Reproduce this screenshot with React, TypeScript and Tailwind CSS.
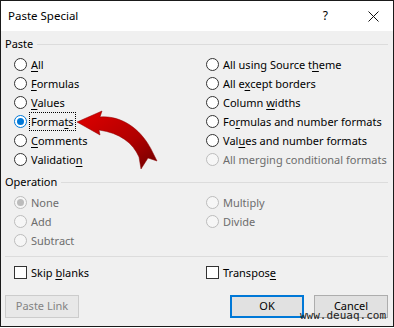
const font = { fontFamily: '"Noto Sans", "Open Sans", sans-serif' };

type Opt = { pre: string; u: string; post: string; checked?: boolean; disabled?: boolean; focus?: boolean };

function Radio({ checked, disabled }: { checked?: boolean; disabled?: boolean }) {
  return (
    <span
      className={`flex h-[13px] w-[13px] shrink-0 items-center justify-center rounded-full border ${
        disabled ? "border-[#bcbcbc] bg-[#f6f6f6]" : checked ? "border-[#0078d7] bg-white" : "border-[#333333] bg-white"
      }`}
    >
      {checked && <span className={`h-[7px] w-[7px] rounded-full ${disabled ? "bg-[#bcbcbc]" : "bg-[#0078d7]"}`} />}
    </span>
  );
}

function Label({ o }: { o: Opt }) {
  return (
    <span
      className={`whitespace-nowrap leading-[15px] ${o.disabled ? "text-[#6d6d6d]" : "text-black"} ${
        o.focus ? "outline-1 outline-dotted outline-black outline-offset-[1px]" : ""
      }`}
    >
      {o.pre}
      {o.u && <span className={o.disabled ? "" : "underline underline-offset-2"}>{o.u}</span>}
      {o.post}
    </span>
  );
}

function RadioRow({ o }: { o: Opt | null }) {
  if (!o) return <div className="h-[19px]" />;
  return (
    <div className="flex h-[19px] items-center gap-[4px]">
      <Radio checked={o.checked} disabled={o.disabled} />
      <Label o={o} />
    </div>
  );
}

function Header({ text }: { text: string }) {
  return (
    <div className="flex h-4 items-center gap-[4px] pr-[5px]">
      <span className="leading-4 text-black">{text}</span>
      <div className="h-px flex-1 bg-[#dcdcdc]" />
    </div>
  );
}

function Checkbox({ o }: { o: Opt }) {
  return (
    <div className="flex h-[19px] items-center gap-[4px]">
      <span className="h-[13px] w-[13px] shrink-0 border border-[#333333] bg-white" />
      <Label o={o} />
    </div>
  );
}

const pasteLeft: Opt[] = [
  { pre: "", u: "A", post: "ll" },
  { pre: "", u: "F", post: "ormulas" },
  { pre: "", u: "V", post: "alues" },
  { pre: "Forma", u: "t", post: "s", checked: true, focus: true },
  { pre: "", u: "C", post: "omments" },
  { pre: "Validatio", u: "n", post: "" },
];

const pasteRight: Opt[] = [
  { pre: "All using Source t", u: "h", post: "eme" },
  { pre: "All e", u: "x", post: "cept borders" },
  { pre: "Column ", u: "w", post: "idths" },
  { pre: "Fo", u: "r", post: "mulas and number formats" },
  { pre: "Val", u: "u", post: "es and number formats" },
  { pre: "All merging conditional formats", u: "", post: "", disabled: true },
];

const opLeft: Opt[] = [
  { pre: "None", u: "", post: "", checked: true, disabled: true },
  { pre: "Add", u: "", post: "", disabled: true },
  { pre: "Subtract", u: "", post: "", disabled: true },
];

const opRight: (Opt | null)[] = [
  { pre: "Multiply", u: "", post: "", disabled: true },
  { pre: "Divide", u: "", post: "", disabled: true },
  null,
];

export default function App() {
  return (
    <div style={font} className="relative h-[328px] w-[394px] overflow-hidden bg-white text-[11px]">
      <div className="flex h-[327px] w-[394px] flex-col border border-[#1a1a1a] bg-[#f0f0f0]">
        {/* title bar */}
        <div className="flex h-[30px] shrink-0 items-center bg-white pl-[7px]">
          <span className="flex-1 text-[11.5px] text-black">Paste Special</span>
          <span className="mr-[40px] text-[12px] text-black">?</span>
          <svg width="11" height="11" viewBox="0 0 11 11" className="mr-[14px]">
            <path d="M0.5 0.5 L10.5 10.5 M10.5 0.5 L0.5 10.5" stroke="#111" strokeWidth="1" />
          </svg>
        </div>

        <div className="flex flex-col pl-[4px] pt-[5px]">
          <Header text="Paste" />
          <div className="mt-[3px] grid grid-cols-[192px_1fr] pl-[9px]">
            <div className="flex flex-col">
              {pasteLeft.map((o, i) => (
                <RadioRow key={i} o={o} />
              ))}
            </div>
            <div className="flex flex-col">
              {pasteRight.map((o, i) => (
                <RadioRow key={i} o={o} />
              ))}
            </div>
          </div>

          <div className="mt-[5px]">
            <Header text="Operation" />
          </div>
          <div className="mt-[3px] grid grid-cols-[192px_1fr] pl-[9px]">
            <div className="flex flex-col">
              {opLeft.map((o, i) => (
                <RadioRow key={i} o={o} />
              ))}
            </div>
            <div className="flex flex-col">
              {opRight.map((o, i) => (
                <RadioRow key={i} o={o} />
              ))}
            </div>
          </div>

          <div className="mr-[5px] mt-[6px] h-px bg-[#dcdcdc]" />

          <div className="mt-[6px] grid grid-cols-[192px_1fr] pl-[9px]">
            <Checkbox o={{ pre: "Skip ", u: "b", post: "lanks" }} />
            <Checkbox o={{ pre: "Transpos", u: "e", post: "" }} />
          </div>

          <div className="mt-[13px] flex items-center pr-[5px]">
            <button className="flex h-[23px] w-[74px] items-center justify-center border border-[#cccccc] bg-[#e8e8e8] text-[#838383]">
              Paste Link
            </button>
            <div className="flex-1" />
            <button className="flex h-[23px] w-[74px] items-center justify-center border-2 border-[#0078d7] bg-[#e1e1e1] text-black">
              OK
            </button>
            <button className="ml-[10px] flex h-[23px] w-[74px] items-center justify-center border border-[#adadad] bg-[#e1e1e1] text-black">
              Cancel
            </button>
          </div>
        </div>
      </div>

      {/* red arrow overlay */}
      <svg className="absolute left-0 top-0" width="394" height="328" viewBox="0 0 394 328">
        <defs>
          <linearGradient id="ar" x1="0" y1="0" x2="1" y2="1">
            <stop offset="0" stopColor="#e00000" />
            <stop offset="0.6" stopColor="#b00000" />
            <stop offset="1" stopColor="#6e0000" />
          </linearGradient>
        </defs>
        <path
          d="M77 122 L102 111 L100 117 C123 115 143 131 153 153 L157 161 L148 158 L141 169 L139 157 C133 143 120 133 99 130 L100 135 Z"
          fill="url(#ar)"
          stroke="#8a0000"
          strokeWidth="0.5"
        />
      </svg>

      {/* watermark */}
      <span
        className="absolute left-[300px] top-[309px] text-[11px] leading-[13px] text-[#222]"
        style={{ fontFamily: '"DejaVu Sans Mono", monospace' }}
      >
        www.deuaq.com
      </span>
    </div>
  );
}
